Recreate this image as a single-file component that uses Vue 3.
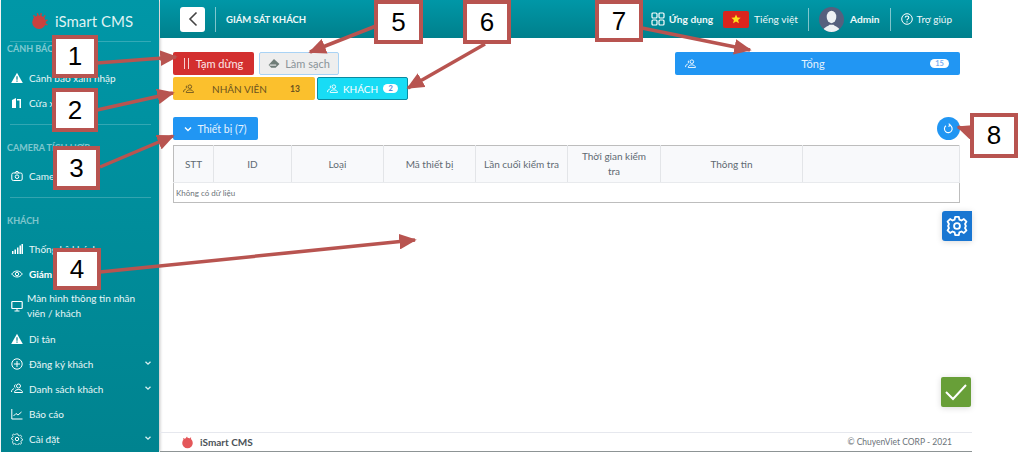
<template>
  <div class="page">
    <aside class="sidebar">
      <div class="brand">
        <svg class="logo" width="18" height="18" viewBox="0 0 16 16"><circle cx="8" cy="9" r="6" fill="#c8423f"/><path d="M3 3l3 4M6.500 1l1.500 5M10 1L9 6M13.500 3L10.500 7M15.500 7l-4 2.500M15.500 11.500l-4-1.500" stroke="#c8423f" stroke-width="1.300"/></svg>
        <span>iSmart CMS</span>
      </div>
      <section v-for="group in menu" :key="group.title" class="group">
        <div class="group-title">{{ group.title }}</div>
        <div v-for="item in group.items" :key="item.label" class="menu-item" :class="{ active: item.active, tall: item.tall }">
          <svg class="menu-icon" width="12" height="12" viewBox="0 0 12 12" v-html="icons[item.icon]"></svg>
          <span class="menu-label">{{ item.label }}</span>
          <svg v-if="item.more" class="chev" width="8" height="8" viewBox="0 0 8 8"><path d="M1.500 2.800L4 5.200l2.500-2.400" fill="none" stroke="#d9f0f2" stroke-width="1.300"/></svg>
        </div>
      </section>
    </aside>

    <main class="main">
      <header class="topbar">
        <button class="back"><svg width="12" height="16" viewBox="0 0 12 16"><path d="M9.500 1.500L3 8l6.500 6.500" fill="none" stroke="#444" stroke-width="1.600"/></svg></button>
        <span class="top-sep"></span>
        <span class="page-title">GIÁM SÁT KHÁCH</span>
        <div class="top-right">
          <svg width="14" height="14" viewBox="0 0 14 14" fill="none" stroke="#fff" stroke-width="1.200"><rect x="1" y="1" width="5" height="5" rx="1"/><rect x="8" y="1" width="5" height="5" rx="1"/><rect x="1" y="8" width="5" height="5" rx="1"/><rect x="8" y="8" width="5" height="5" rx="1"/></svg>
          <b class="apps">Ứng dụng</b>
          <span class="flag"><svg width="10" height="10" viewBox="0 0 20 20"><path d="M10 1l2.600 6.200 6.700.5-5.100 4.400 1.600 6.500L10 15.100l-5.800 3.500 1.600-6.500L.7 7.700l6.700-.5z" fill="#ffe11a"/></svg></span>
          <span class="lang">Tiếng việt</span>
          <span class="bar"></span>
          <span class="avatar"><svg width="25" height="25" viewBox="0 0 24 24"><ellipse cx="12" cy="9.500" rx="4.600" ry="6" fill="#eef1f4"/><path d="M3.500 24c.5-5 5-5 6.500-7h4c1.500 2 6 2 6.500 7z" fill="#eef1f4"/></svg></span>
          <b class="admin">Admin</b>
          <span class="bar"></span>
          <svg width="12" height="12" viewBox="0 0 12 12" fill="none" stroke="#fff"><circle cx="6" cy="6" r="5.300"/><path d="M4.300 4.600c0-2.200 3.500-2.200 3.500 0 0 1.300-1.800 1.300-1.800 2.600M6 8.300v1.100" stroke-width="1.100"/></svg>
          <span class="help">Trợ giúp</span>
        </div>
      </header>

      <section class="content">
        <div class="actions">
          <div class="action-left">
            <div class="btn-row">
              <button class="btn pause"><span class="pause-bars"></span>Tạm dừng</button>
              <button class="btn clean">
                <svg width="12" height="10" viewBox="0 0 11 9"><path d="M5.500 0l5 4.500-3.500 3.500H3L.5 5.500z" fill="#6f7d78"/><path d="M1.500 5.500h6" stroke="#eee"/></svg>
                Làm sạch
              </button>
            </div>
            <div class="btn-row">
              <button class="btn staff">
                <svg width="11" height="9" viewBox="0 0 12 10" fill="none" stroke="#6b5320" v-html="icons.people"></svg>
                <span class="staff-name">NHÂN VIÊN</span>
                <b class="staff-count">13</b>
              </button>
              <button class="btn guest">
                <svg width="11" height="9" viewBox="0 0 12 10" fill="none" stroke="#fff" v-html="icons.people"></svg>
                KHÁCH
                <span class="pill">2</span>
              </button>
            </div>
          </div>
          <button class="btn total">
            <svg width="11" height="9" viewBox="0 0 12 10" fill="none" stroke="#fff" v-html="icons.people"></svg>
            <span class="total-name">Tổng</span>
            <span class="pill">15</span>
          </button>
        </div>

        <div class="device-row">
          <button class="btn device">
            <svg width="8" height="8" viewBox="0 0 8 8"><path d="M1 2.500L4 5.500l3-3" fill="none" stroke="#fff" stroke-width="1.400"/></svg>
            Thiết bị (7)
          </button>
          <button class="refresh"><svg width="11" height="11" viewBox="0 0 12 12" fill="none" stroke="#fff" stroke-width="1.200"><path d="M7.500 2.500A4.200 4.200 0 1 1 3.200 3"/><path d="M6.200 .6L8 2.400 6 3.800"/></svg></button>
        </div>

        <table class="table">
          <colgroup><col v-for="w in colWidths" :key="w.id" :style="{ width: w.size + 'px' }" /></colgroup>
          <thead><tr><th v-for="c in columns" :key="c">{{ c }}</th></tr></thead>
          <tbody><tr><td :colspan="columns.length">Không có dữ liệu</td></tr></tbody>
        </table>
      </section>

      <footer class="footer">
        <span class="foot-brand">
          <svg width="13" height="13" viewBox="0 0 16 16"><circle cx="8" cy="8.500" r="6.500" fill="#e4575a"/><path d="M3 3l3 4M7 1l1 5M12 2l-2 5" stroke="#e4575a" stroke-width="1.400"/></svg>
          <b>iSmart CMS</b>
        </span>
        <span class="copy">© ChuyenViet CORP - 2021</span>
      </footer>

      <button class="float gear">
        <svg width="22" height="22" viewBox="0 0 24 24" fill="none" stroke="#fff" stroke-width="2" stroke-linejoin="round"><circle cx="12" cy="12" r="3.200"/><path d="M10 2h4l.6 3 2.300 1 2.600-1.600 2.800 2.800L20.700 9.800l1 2.200-1 2.200 1.600 2.600-2.800 2.800-2.600-1.600-2.300 1-.6 3h-4l-.6-3-2.300-1-2.600 1.600-2.800-2.800 1.600-2.600-1-2.200 1-2.200-1.600-2.600 2.800-2.800L7.100 6l2.300-1z"/></svg>
      </button>
      <button class="float ok">
        <svg width="24" height="18" viewBox="0 0 24 18"><path d="M2 9l7 7L22 2" fill="none" stroke="#fff" stroke-width="2"/></svg>
      </button>
    </main>

    <svg class="arrows" width="1021" height="452" viewBox="0 0 1021 452">
      <defs>
        <marker id="head" markerWidth="5" markerHeight="4.500" refX="4.500" refY="2.250" orient="auto"><path d="M0 0L5 2.250 0 4.500z" fill="#b85450"/></marker>
      </defs>
      <line v-for="a in arrows" :key="a.id" :x1="a.x1" :y1="a.y1" :x2="a.x2" :y2="a.y2" stroke="#b85450" stroke-width="3.500" marker-end="url(#head)" />
    </svg>
    <div v-for="c in callouts" :key="c.n" class="callout" :style="{ left: c.x + 'px', top: c.y + 'px', width: c.w + 'px', height: c.h + 'px' }">{{ c.n }}</div>
  </div>
</template>

<script setup>
const icons = {
  warn: '<path d="M6 .8L11.800 11H.2z" fill="#fff"/><path d="M6 4.300v3.500M6 8.600v1.200" stroke="#00838f" stroke-width="1.200"/>',
  door: '<path d="M1 11V3l4-2v10zM6 2h4v9H8.500V3.500H6z" fill="#fff"/>',
  camera: '<rect x=".8" y="3" width="10.400" height="7.500" rx="1.500" fill="none" stroke="#fff"/><path d="M4 3l1-1.500h2L8 3" fill="none" stroke="#fff"/><circle cx="6" cy="6.700" r="1.800" fill="none" stroke="#fff"/>',
  signal: '<path d="M1 8h1.500v3H1zM3.500 6.500H5V11H3.500zM6 4.500h1.500V11H6zM8.500 2.500H10V11H8.500zM10.500 1H12v10h-1.500z" fill="#fff"/>',
  eye: '<path d="M.7 6C3.500 2 8.500 2 11.300 6 8.500 10 3.500 10 .7 6z" fill="none" stroke="#fff"/><circle cx="6" cy="6" r="1.700" fill="none" stroke="#fff"/>',
  monitor: '<rect x=".8" y="1.500" width="10.400" height="7" rx=".8" fill="none" stroke="#fff" stroke-width="1.200"/><path d="M6 8.500V11M3.500 11h5" stroke="#fff"/>',
  plus: '<circle cx="6" cy="6" r="5.200" fill="none" stroke="#fff"/><path d="M6 3v6M3 6h6" stroke="#fff"/>',
  people: '<circle cx="7.500" cy="3" r="2"/><path d="M3.500 9.500c0-4 8-4 8 0zM4.500 1.500a2 2 0 0 0 0 3.500M.5 9c0-2 1-3 2.500-3.300"/>',
  chart: '<path d="M.8 1v10h10.700" fill="none" stroke="#fff"/><path d="M2.500 8L5 5.500l2 1.500 3.500-3" fill="none" stroke="#fff"/>',
  gear: '<circle cx="6" cy="6" r="1.700" fill="none" stroke="#fff"/><path d="M5 .8h2l.3 1.500 1.300.6 1.300-.8 1.200 1.400-.8 1.300.4 1.200 1.400.5v1.400l-1.400.5-.4 1.200.8 1.300-1.200 1.400-1.300-.8-1.300.6-.3 1.200H5l-.3-1.200-1.300-.6-1.300.8L.9 9.600l.8-1.300-.4-1.200L0 6.600V5.200l1.300-.5.4-1.200-.8-1.300 1.200-1.400 1.300.8 1.300-.6z" fill="none" stroke="#fff" stroke-width=".9" transform="translate(.6 .2) scale(.9)"/>',
}
icons.peopleMenu = '<g fill="none" stroke="#fff">' + icons.people + '</g>'

const menu = [
  { title: 'CẢNH BÁO', items: [
    { label: 'Cảnh báo xâm nhập', icon: 'warn' },
    { label: 'Cửa xâm nhập', icon: 'door' },
  ] },
  { title: 'CAMERA TÍCH HỢP', items: [
    { label: 'Camera', icon: 'camera' },
  ] },
  { title: 'KHÁCH', items: [
    { label: 'Thống kê khách', icon: 'signal' },
    { label: 'Giám sát khách', icon: 'eye', active: true },
    { label: 'Màn hình thông tin nhân viên / khách', icon: 'monitor', tall: true },
    { label: 'Di tản', icon: 'warn' },
    { label: 'Đăng ký khách', icon: 'plus', more: true },
    { label: 'Danh sách khách', icon: 'peopleMenu', more: true },
    { label: 'Báo cáo', icon: 'chart' },
    { label: 'Cài đặt', icon: 'gear', more: true },
  ] },
]

const columns = ['STT', 'ID', 'Loại', 'Mã thiết bị', 'Lần cuối kiểm tra', 'Thời gian kiểm tra', 'Thông tin', '']
const colWidths = [40, 78, 92, 92, 92, 93, 142, 157].map((size, id) => ({ id, size }))

const callouts = [
  { n: 1, x: 52, y: 35, w: 46, h: 43 },
  { n: 2, x: 52, y: 88, w: 46, h: 44 },
  { n: 3, x: 53, y: 146, w: 47, h: 44 },
  { n: 4, x: 53, y: 248, w: 48, h: 42 },
  { n: 5, x: 374, y: 0, w: 49, h: 44 },
  { n: 6, x: 463, y: 0, w: 48, h: 44 },
  { n: 7, x: 595, y: 0, w: 48, h: 42 },
  { n: 8, x: 970, y: 113, w: 48, h: 45 },
]

const arrows = [
  { id: 1, x1: 97, y1: 63, x2: 176, y2: 57 },
  { id: 2, x1: 97, y1: 110, x2: 173, y2: 93 },
  { id: 3, x1: 100, y1: 167, x2: 173, y2: 136 },
  { id: 4, x1: 100, y1: 272, x2: 415, y2: 240 },
  { id: 5, x1: 376, y1: 26, x2: 310, y2: 52 },
  { id: 6, x1: 485, y1: 44, x2: 408, y2: 88 },
  { id: 7, x1: 642, y1: 28, x2: 750, y2: 50 },
  { id: 8, x1: 972, y1: 132, x2: 958, y2: 127 },
]
</script>

<style>
html, body { margin: 0; background: #fff; overflow: hidden; }
</style>

<style scoped>
.page {
  position: relative;
  display: flex;
  width: 1021px;
  height: 452px;
  overflow: hidden;
  background: #fff;
  font-family: "Lato", "Noto Sans", sans-serif;
  color: #5f6a72;
}
.sidebar {
  width: 158px;
  margin-left: 1px;
  flex-shrink: 0;
  background: linear-gradient(180deg, #0097a7 0%, #00838f 100%);
  color: #e8f6f7;
  font-size: 10px;
  box-shadow: 1px 0 3px rgba(0, 0, 0, 0.25);
}
.brand {
  display: flex;
  align-items: center;
  gap: 7px;
  height: 41px;
  padding-left: 29px;
  font-size: 15px;
  color: #dff2f3;
  box-sizing: border-box;
}
.group { margin: 0 8px 0 0; }
.group + .group { margin-top: 9px; }
.group-title {
  margin-left: 9px;
  border-top: 1px solid rgba(255, 255, 255, 0.2);
  padding: 16px 0 9px;
  text-indent: -3px;
  font-size: 9px;
  line-height: 13px;
  font-weight: 700;
  color: rgba(255, 255, 255, 0.5);
}
.group:first-of-type .group-title { padding: 0 0 10px; }
.menu-item {
  display: flex;
  align-items: center;
  height: 25px;
  padding-left: 10px;
  gap: 6px;
  position: relative;
}
.menu-item.tall { height: 40px; line-height: 15px; gap: 4px; }
.menu-item.active { font-weight: 700; color: #fff; }
.menu-icon { flex-shrink: 0; }
.menu-label { width: 114px; }
.chev { position: absolute; left: 143px; top: 8px; }

.main {
  position: relative;
  width: 812px;
  margin-left: 1px;
  display: flex;
  flex-direction: column;
  flex-shrink: 0;
}
.topbar {
  height: 38px;
  flex-shrink: 0;
  display: flex;
  align-items: center;
  padding-left: 20px;
  background: linear-gradient(180deg, #0097a7 0%, #00808c 100%);
  color: #eef8f9;
  font-size: 10px;
}
.back {
  width: 25px;
  height: 25px;
  padding: 0;
  border: none;
  border-radius: 3px;
  background: #fff;
  display: flex;
  align-items: center;
  justify-content: center;
}
.top-sep { width: 1px; height: 25px; margin: 0 10px; background: rgba(255, 255, 255, 0.5); }
.page-title { font-size: 9.5px; font-weight: 700; }
.top-right { margin-left: auto; display: flex; align-items: center; padding-right: 20px; }
.apps { margin-left: 4px; font-size: 10.200px; }
.flag {
  width: 26px;
  height: 17px;
  margin-left: 10px;
  border-radius: 2px;
  background: #da251d;
  display: flex;
  align-items: center;
  justify-content: center;
}
.lang { margin-left: 5px; font-size: 10.200px; }
.bar { width: 1px; height: 23px; margin: 0 10px 0 10px; background: rgba(255, 255, 255, 0.5); }
.avatar {
  width: 25px;
  height: 25px;
  border-radius: 50%;
  background: #56607e;
  overflow: hidden;
}
.admin { margin-left: 6px; font-size: 10.200px; }
.help { margin-left: 4px; }

.content { flex: 1; padding: 14px 12px 0 13px; }
.actions { display: flex; justify-content: space-between; align-items: flex-start; }
.btn-row { display: flex; gap: 5px; margin-bottom: 2px; }
.btn-row + .btn-row { gap: 2px; }
.btn {
  height: 23px;
  padding: 0;
  border: none;
  border-radius: 2px;
  display: flex;
  align-items: center;
  justify-content: center;
  gap: 5px;
  font-family: inherit;
  font-size: 10px;
  color: #fff;
  box-sizing: border-box;
}
.pause { width: 81px; background: #d32f2f; color: #fde7e7; gap: 7px; font-size: 11px; }
.pause-bars { width: 5px; height: 11px; border-left: 1.500px solid #f7d0d0; border-right: 1.500px solid #f7d0d0; box-sizing: border-box; }
.clean { width: 80px; background: #eeeeee; border: 1px solid #a9d3f5; color: #8a9499; font-size: 11px; }
.staff {
  width: 142px;
  justify-content: flex-start;
  padding-left: 10px;
  background: #fbc02d;
  color: #6b5320;
  gap: 0;
}
.staff-name { margin-left: 18px; width: 78px; text-align: left; }
.staff-count { font-size: 8.500px; }
.guest { width: 91px; background: #18dcf5; border: 1px solid #0b8aa0; }
.pill {
  min-width: 15px;
  height: 9px;
  padding: 0 2px;
  border-radius: 5px;
  background: #fff;
  color: #5a85d8;
  font-size: 7.500px;
  font-weight: 700;
  line-height: 9px;
  text-align: center;
  box-sizing: border-box;
}
.total {
  width: 285px;
  padding: 0 11px 0 10px;
  background: #2196f3;
  justify-content: space-between;
  font-size: 11px;
}
.total .pill { width: 19px; color: #7daef0; }
.total-name { color: #e3f2fd; }
.device-row {
  display: flex;
  justify-content: space-between;
  margin-top: 15px;
  margin-bottom: 5px;
}
.device { width: 85px; background: #2196f3; color: #e6f3fe; font-size: 10.500px; }
.refresh {
  width: 23px;
  height: 23px;
  padding: 0;
  border: none;
  border-radius: 50%;
  background: #2196f3;
  display: flex;
  align-items: center;
  justify-content: center;
}
.table {
  width: 786px;
  border-collapse: collapse;
  table-layout: fixed;
  border: 1px solid #bdbdbd;
  font-size: 10px;
}
.table th {
  height: 37px;
  padding: 0 8px;
  box-sizing: border-box;
  background: #f8f9fb;
  border-right: 1px solid #e3e5e8;
  border-bottom: 1px solid #e8eaed;
  font-weight: 400;
  line-height: 15px;
  color: #5f6a72;
}
.table td { height: 19px; padding: 0 2px; font-size: 8px; color: #6b7379; }

.footer {
  height: 20px;
  flex-shrink: 0;
  display: flex;
  align-items: center;
  justify-content: space-between;
  padding: 0 20px 0 21px;
  border-top: 1px solid #e6e8ee;
  border-bottom: 1px solid #8d9495;
  box-sizing: border-box;
}
.foot-brand { display: flex; align-items: center; gap: 6px; font-size: 10px; color: #4b5258; }
.copy { font-size: 8.500px; color: #6b7379; }
.float {
  position: absolute;
  right: 0;
  padding: 0;
  border: none;
  display: flex;
  align-items: center;
  justify-content: center;
  box-shadow: 0 1px 6px rgba(0, 0, 0, 0.15);
}
.gear { top: 211px; width: 30px; height: 30px; background: #1976d2; border-radius: 3px 0 0 3px; }
.ok { top: 377px; right: 1px; width: 30px; height: 30px; background: #689f38; border-radius: 2px; }

.arrows { position: absolute; left: 0; top: 0; pointer-events: none; }
.callout {
  position: absolute;
  display: flex;
  align-items: center;
  justify-content: center;
  background: #fff;
  border: 4px solid #b85450;
  box-sizing: border-box;
  font-family: "Liberation Sans", Arial, sans-serif;
  font-size: 26px;
  color: #000;
}
</style>
